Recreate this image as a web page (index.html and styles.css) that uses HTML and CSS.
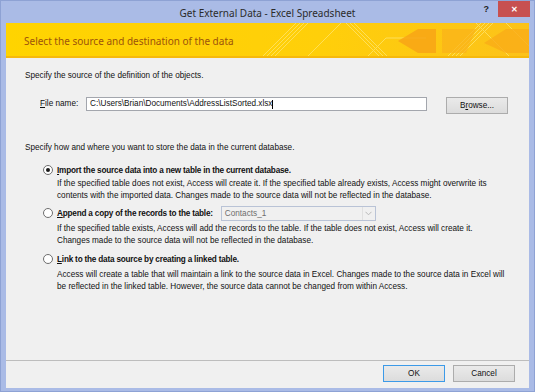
FILE: index.html
```html
<!DOCTYPE html>
<html>
<head>
<meta charset="utf-8">
<link rel="stylesheet" href="styles.css">
</head>
<body>
<div class="window">
  <div class="titlebar">
    <div class="title">Get External Data - Excel Spreadsheet</div>
    <div class="help">?</div>
    <div class="close">&#x2715;</div>
  </div>
  <div class="banner">
    <svg class="deco" width="523" height="35" viewBox="0 0 523 35">
      <defs>
        <linearGradient id="bg" x1="0" y1="0" x2="1" y2="0">
          <stop offset="0" stop-color="#ffd400"/>
          <stop offset="0.6" stop-color="#ffcf0a"/>
          <stop offset="1" stop-color="#fcc21a"/>
        </linearGradient>
      </defs>
      <rect width="523" height="35" fill="url(#bg)"/>
      <g stroke="#ffe46a" stroke-width="1" opacity="0.8">
        <line x1="255" y1="35" x2="290" y2="0"/>
        <line x1="259" y1="35" x2="294" y2="0"/>
        <line x1="263" y1="35" x2="298" y2="0"/>
        <line x1="267" y1="35" x2="302" y2="0"/>
        <line x1="300" y1="35" x2="335" y2="0"/>
        <line x1="340" y1="0" x2="375" y2="35"/>
        <line x1="344" y1="0" x2="379" y2="35"/>
        <line x1="348" y1="0" x2="383" y2="35"/>
        <line x1="360" y1="35" x2="380" y2="15"/>
        <line x1="380" y1="15" x2="420" y2="15"/>
        <line x1="440" y1="35" x2="475" y2="0"/>
        <line x1="444" y1="35" x2="479" y2="0"/>
        <line x1="448" y1="35" x2="483" y2="0"/>
        <line x1="452" y1="35" x2="487" y2="0"/>
        <line x1="470" y1="0" x2="505" y2="35"/>
        <line x1="500" y1="0" x2="523" y2="23"/>
      </g>
      <polygon points="392,18 412,6 430,6 430,30 412,30" fill="#f8a516" opacity="0.85"/>
      <polygon points="436,6 470,6 460,30 436,30" fill="#fab21a" opacity="0.7"/>
      <polygon points="478,20 500,6 523,6 523,30 500,30" fill="#f9ac18" opacity="0.8"/>
      <rect y="33" width="523" height="2" fill="#f6b90c"/>
    </svg>
    <div class="banner-text">Select the source and destination of the data</div>
  </div>
  <div class="content">
    <p class="section">Specify the source of the definition of the objects.</p>
    <div class="file-row">
      <label class="file-label"><u>F</u>ile name:</label>
      <div class="input">C:\Users\Brian\Documents\AddressListSorted.xlsx<span class="caret"></span></div>
      <div class="btn browse">B<u>r</u>owse...</div>
    </div>
    <p class="section section2">Specify how and where you want to store the data in the current database.</p>

    <div class="option opt1">
      <div class="opt-head"><span class="radio checked"></span><span class="opt-label"><u>I</u>mport the source data into a new table in the current database.</span></div>
      <div class="desc">If the specified table does not exist, Access will create it. If the specified table already exists, Access might overwrite its<br>contents with the imported data. Changes made to the source data will not be reflected in the database.</div>
    </div>

    <div class="option opt2">
      <div class="opt-head"><span class="radio"></span><span class="opt-label"><u>A</u>ppend a copy of the records to the table:</span>
        <div class="combo"><span>Contacts_1</span><span class="arrow"><svg width="7" height="5" viewBox="0 0 7 5"><path d="M0.5 0.8 L3.5 3.8 L6.5 0.8" fill="none" stroke="#b8b8b8" stroke-width="1"/></svg></span></div>
      </div>
      <div class="desc">If the specified table exists, Access will add the records to the table. If the table does not exist, Access will create it.<br>Changes made to the source data will not be reflected in the database.</div>
    </div>

    <div class="option opt3">
      <div class="opt-head"><span class="radio"></span><span class="opt-label"><u>L</u>ink to the data source by creating a linked table.</span></div>
      <div class="desc">Access will create a table that will maintain a link to the source data in Excel. Changes made to the source data in Excel will<br>be reflected in the linked table. However, the source data cannot be changed from within Access.</div>
    </div>
  </div>
  <div class="footer">
    <div class="btn ok">OK</div>
    <div class="btn cancel">Cancel</div>
  </div>
</div>
</body>
</html>
```

FILE: styles.css
```css
html, body {
  margin: 0;
  padding: 0;
}
body {
  width: 535px;
  height: 392px;
  overflow: hidden;
  font-family: "Liberation Sans", Arial, sans-serif;
  font-size: 8.2px;
  color: #111;
}
.window {
  box-sizing: border-box;
  width: 535px;
  height: 392px;
  background: #aabbe6;
  border: 1px solid #8ea2d4;
  padding: 0 5px 3px 5px;
  display: flex;
  flex-direction: column;
}
.titlebar {
  height: 22px;
  flex: none;
  position: relative;
  display: flex;
  align-items: center;
  justify-content: center;
}
.title {
  font-family: "Noto Sans", "Open Sans", sans-serif;
  font-size: 10px;
  color: #2b2b2b;
  margin-top: 1px;
}
.help {
  position: absolute;
  right: 40px;
  top: 3px;
  font-weight: bold;
  font-size: 9px;
  color: #222;
}
.close {
  position: absolute;
  right: -1px;
  top: 0;
  width: 32px;
  height: 16px;
  background: #c75050;
  color: #fff;
  font-size: 8px;
  font-weight: bold;
  display: flex;
  align-items: center;
  justify-content: center;
}
.banner {
  height: 35px;
  flex: none;
  position: relative;
  display: flex;
  align-items: center;
}
.deco {
  position: absolute;
  left: 0;
  top: 0;
}
.banner-text {
  position: relative;
  margin-left: 18px;
  margin-top: 1px;
  font-family: "Noto Sans", "Open Sans", sans-serif;
  font-size: 10px;
  color: #9c530c;
}
.content {
  flex: 1;
  background: #f0f0f0;
  padding: 12px 0 0 19px;
}
.section {
  margin: 0;
  line-height: 11px;
}
.file-row {
  display: flex;
  align-items: flex-start;
  margin-top: 16px;
  height: 18px;
}
.file-label {
  margin-left: 15px;
  width: 46px;
  line-height: 14px;
}
.input {
  box-sizing: border-box;
  width: 341px;
  height: 14px;
  background: #fff;
  border: 1px solid #a3a6ad;
  line-height: 12px;
  padding-left: 3px;
  display: flex;
  align-items: center;
}
.caret {
  display: inline-block;
  width: 1px;
  height: 9px;
  background: #000;
}
.btn {
  box-sizing: border-box;
  height: 17px;
  width: 62px;
  background: linear-gradient(#eaeaea, #dcdcdc);
  border: 1px solid #acacac;
  display: flex;
  align-items: center;
  justify-content: center;
}
.browse {
  margin-left: 19px;
}
.section2 {
  margin-top: 27px;
}
.option {
  margin-left: 18px;
}
.opt1 {
  margin-top: 11px;
}
.opt-head {
  display: flex;
  align-items: center;
  height: 12px;
}
.radio {
  box-sizing: border-box;
  width: 10px;
  height: 10px;
  border: 1px solid #6e6e6e;
  border-radius: 50%;
  background: #fff;
  margin-right: 4px;
  display: flex;
  align-items: center;
  justify-content: center;
}
.radio.checked::after {
  content: "";
  width: 4px;
  height: 4px;
  border-radius: 50%;
  background: #1a1a1a;
}
.opt-label {
  font-weight: bold;
  letter-spacing: -0.2px;
}
.desc {
  margin-left: 14px;
  margin-top: 2px;
  line-height: 11.5px;
}
.opt2 {
  margin-top: 4px;
}
.opt2 .opt-head {
  height: 16px;
}
.opt2 .desc {
  margin-top: 2px;
}
.combo {
  box-sizing: border-box;
  margin-left: 8px;
  width: 155px;
  height: 15px;
  border: 1px solid #b9c3d6;
  background: #f0f0f0;
  color: #6d6d6d;
  display: flex;
  align-items: center;
  justify-content: space-between;
  padding-left: 3px;
}
.arrow {
  width: 12px;
  height: 13px;
  border-left: 1px solid #e0e0e0;
  display: flex;
  align-items: center;
  justify-content: center;
}
.opt3 {
  margin-top: 7px;
}
.opt3 .desc {
  margin-top: 4px;
}
.footer {
  flex: none;
  height: 28px;
  background: #f0f0f0;
  border-top: 1px solid #bdbdbd;
  display: flex;
  justify-content: flex-end;
  align-items: flex-start;
  padding-top: 4px;
  padding-right: 14px;
  box-sizing: border-box;
}
.ok {
  border-color: #3c9ae8;
  margin-right: 8px;
}
```
